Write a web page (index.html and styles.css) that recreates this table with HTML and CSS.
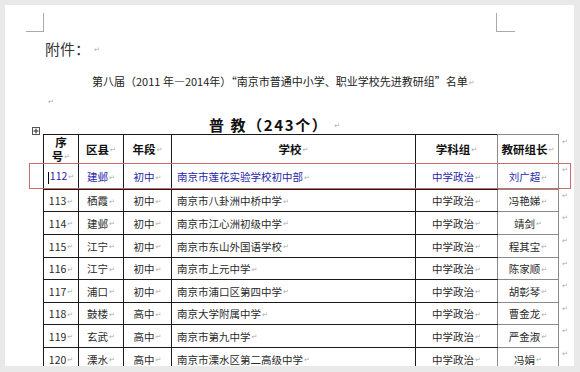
FILE: index.html
```html
<!DOCTYPE html>
<html lang="zh">
<head>
<meta charset="utf-8">
<link rel="stylesheet" href="styles.css">
</head>
<body>
<div class="page">
  <div class="marks"><span class="mark-l"></span><span class="mark-r"></span></div>
  <p class="annex">附件：<span class="pm">↵</span></p>
  <p class="title">第八届（2011 年—2014年）“南京市普通中小学、职业学校先进教研组”名单<span class="pm">↵</span></p>
  <p class="blank"><span class="pm">↵</span></p>
  <p class="heading">普 教（243个）<span class="pm">↵</span></p>
  <div class="table-wrap">
    <svg class="handle" width="8" height="8" viewBox="0 0 8 8"><rect x="0.5" y="0.5" width="7" height="7" fill="#fff" stroke="#555"/><path d="M4 1.5v5M1.5 4h5" stroke="#333" stroke-width="1"/><path d="M3 2.5h2M3 5.5h2M2.5 3v2M5.5 3v2" stroke="#777" stroke-width="0.6"/></svg>
    <table>
      <colgroup>
        <col class="c1"><col class="c2"><col class="c3"><col class="c4"><col class="c5"><col class="c6"><col class="c7">
      </colgroup>
      <tr class="head">
        <td class="two">序<br>号<span class="pm">↵</span></td>
        <td>区县<span class="pm">↵</span></td>
        <td>年段<span class="pm">↵</span></td>
        <td>学校<span class="pm">↵</span></td>
        <td>学科组<span class="pm">↵</span></td>
        <td>教研组长<span class="pm">↵</span></td>
        <td class="eor"><span class="pm">↵</span></td>
      </tr>
      <tr class="sel r26">
        <td><span class="caret"></span>112<span class="pm">↵</span></td>
        <td>建邺<span class="pm">↵</span></td>
        <td>初中<span class="pm">↵</span></td>
        <td class="school">南京市莲花实验学校初中部<span class="pm">↵</span></td>
        <td>中学政治<span class="pm">↵</span></td>
        <td>刘广超<span class="pm">↵</span></td>
        <td class="eor"><span class="pm">↵</span></td>
      </tr>
      <tr class="r22">
        <td>113<span class="pm">↵</span></td><td>栖霞<span class="pm">↵</span></td><td>初中<span class="pm">↵</span></td>
        <td class="school">南京市八卦洲中桥中学<span class="pm">↵</span></td><td>中学政治<span class="pm">↵</span></td><td>冯艳娣<span class="pm">↵</span></td>
        <td class="eor"><span class="pm">↵</span></td>
      </tr>
      <tr class="r23">
        <td>114<span class="pm">↵</span></td><td>建邺<span class="pm">↵</span></td><td>初中<span class="pm">↵</span></td>
        <td class="school">南京市江心洲初级中学<span class="pm">↵</span></td><td>中学政治<span class="pm">↵</span></td><td>靖剑<span class="pm">↵</span></td>
        <td class="eor"><span class="pm">↵</span></td>
      </tr>
      <tr class="r23">
        <td>115<span class="pm">↵</span></td><td>江宁<span class="pm">↵</span></td><td>初中<span class="pm">↵</span></td>
        <td class="school">南京市东山外国语学校<span class="pm">↵</span></td><td>中学政治<span class="pm">↵</span></td><td>程其宝<span class="pm">↵</span></td>
        <td class="eor"><span class="pm">↵</span></td>
      </tr>
      <tr class="r22">
        <td>116<span class="pm">↵</span></td><td>江宁<span class="pm">↵</span></td><td>初中<span class="pm">↵</span></td>
        <td class="school">南京市上元中学<span class="pm">↵</span></td><td>中学政治<span class="pm">↵</span></td><td>陈家顺<span class="pm">↵</span></td>
        <td class="eor"><span class="pm">↵</span></td>
      </tr>
      <tr class="r23">
        <td>117<span class="pm">↵</span></td><td>浦口<span class="pm">↵</span></td><td>初中<span class="pm">↵</span></td>
        <td class="school">南京市浦口区第四中学<span class="pm">↵</span></td><td>中学政治<span class="pm">↵</span></td><td>胡彰琴<span class="pm">↵</span></td>
        <td class="eor"><span class="pm">↵</span></td>
      </tr>
      <tr class="r22">
        <td>118<span class="pm">↵</span></td><td>鼓楼<span class="pm">↵</span></td><td>高中<span class="pm">↵</span></td>
        <td class="school">南京大学附属中学<span class="pm">↵</span></td><td>中学政治<span class="pm">↵</span></td><td>曹金龙<span class="pm">↵</span></td>
        <td class="eor"><span class="pm">↵</span></td>
      </tr>
      <tr class="r23">
        <td>119<span class="pm">↵</span></td><td>玄武<span class="pm">↵</span></td><td>高中<span class="pm">↵</span></td>
        <td class="school">南京市第九中学<span class="pm">↵</span></td><td>中学政治<span class="pm">↵</span></td><td>严金淑<span class="pm">↵</span></td>
        <td class="eor"><span class="pm">↵</span></td>
      </tr>
      <tr class="r23">
        <td>120<span class="pm">↵</span></td><td>溧水<span class="pm">↵</span></td><td>高中<span class="pm">↵</span></td>
        <td class="school">南京市溧水区第二高级中学<span class="pm">↵</span></td><td>中学政治<span class="pm">↵</span></td><td>冯娟<span class="pm">↵</span></td>
        <td class="eor"><span class="pm">↵</span></td>
      </tr>
    </table>
    <div class="highlight"></div>
  </div>
</div>
</body>
</html>
```

FILE: styles.css
```css
html, body {
  margin: 0;
  padding: 0;
}
body {
  background: #e9e9e9;
  font-family: "Noto Sans CJK SC", "Liberation Sans", sans-serif;
  color: #222;
}
.page {
  margin: 5px 0 0 5px;
  width: 569px;
  height: 361px;
  background: #fff;
  overflow: hidden;
}
.marks {
  display: flex;
  margin-top: 8px;
  height: 19px;
}
.mark-l, .mark-r {
  display: block;
  box-sizing: border-box;
  height: 19px;
  border-bottom: 1px solid #aaa;
}
.mark-l {
  margin-left: 21px;
  width: 18px;
  border-right: 1px solid #aaa;
}
.mark-r {
  margin-left: 452px;
  width: 19px;
  border-left: 1px solid #aaa;
}
p {
  margin: 0;
  white-space: nowrap;
  overflow: visible;
}
.pm {
  font-family: "DejaVu Sans", sans-serif;
  font-size: 7px;
  line-height: 7px;
  font-weight: normal;
  color: #aaa;
  margin-left: 1px;
  vertical-align: middle;
  letter-spacing: 0;
}
.annex {
  margin: 7px 0 0 40px;
  height: 20px;
  font-size: 15px;
  line-height: 20px;
  color: #333;
}
.annex .pm { margin-left: 4px; }
.title {
  margin: 14px 0 0 87px;
  height: 16px;
  font-size: 11px;
  line-height: 16px;
  letter-spacing: 0;
  color: #222;
}
.blank {
  margin: 3px 0 0 42px;
  height: 16px;
  line-height: 16px;
  font-size: 11px;
}
.heading {
  margin: 8px 0 0 204px;
  height: 18px;
  font-size: 15px;
  line-height: 18px;
  font-weight: bold;
  letter-spacing: 1.6px;
  color: #111;
}
.heading .pm { margin-left: 6px; }
.table-wrap {
  position: relative;
  margin-left: 38px;
}
.handle {
  position: absolute;
  left: -11px;
  top: -7px;
  display: block;
}
table {
  border-collapse: collapse;
  table-layout: fixed;
  width: 530px;
}
col.c1 { width: 35px; }
col.c2 { width: 45px; }
col.c3 { width: 48px; }
col.c4 { width: 244px; }
col.c5 { width: 82px; }
col.c6 { width: 61px; }
col.c7 { width: 15px; }
td {
  border: 1px solid #1a1a1a;
  padding: 0;
  text-align: center;
  vertical-align: middle;
  font-size: 10.5px;
  line-height: 13px;
  white-space: nowrap;
  overflow: hidden;
  color: #2a2a2a;
}
td:nth-child(5) { border-right-color: #8a8a8a; }
td:nth-child(6) { border-color: #8a8a8a; }
td.school {
  text-align: left;
  padding-left: 5px;
}
td.eor {
  border: none;
  text-align: left;
  vertical-align: top;
  padding: 2px 0 0 2px;
  line-height: 8px;
}
tr.head { height: 29px; }
tr.head td {
  font-weight: bold;
  font-size: 11.5px;
  color: #111;
}
tr.head td.two { line-height: 14px; }
tr.r26 { height: 26px; }
tr.r22 { height: 22px; }
tr.r23 { height: 23px; }
tr.sel td { color: #2626a8; }
.caret {
  display: inline-block;
  width: 1px;
  height: 12px;
  background: #000;
  vertical-align: middle;
  margin-right: 1px;
}
.highlight {
  position: absolute;
  left: -14px;
  top: 29px;
  width: 542px;
  height: 26px;
  box-sizing: border-box;
  border: 1px solid #c96c6f;
  pointer-events: none;
}
```
